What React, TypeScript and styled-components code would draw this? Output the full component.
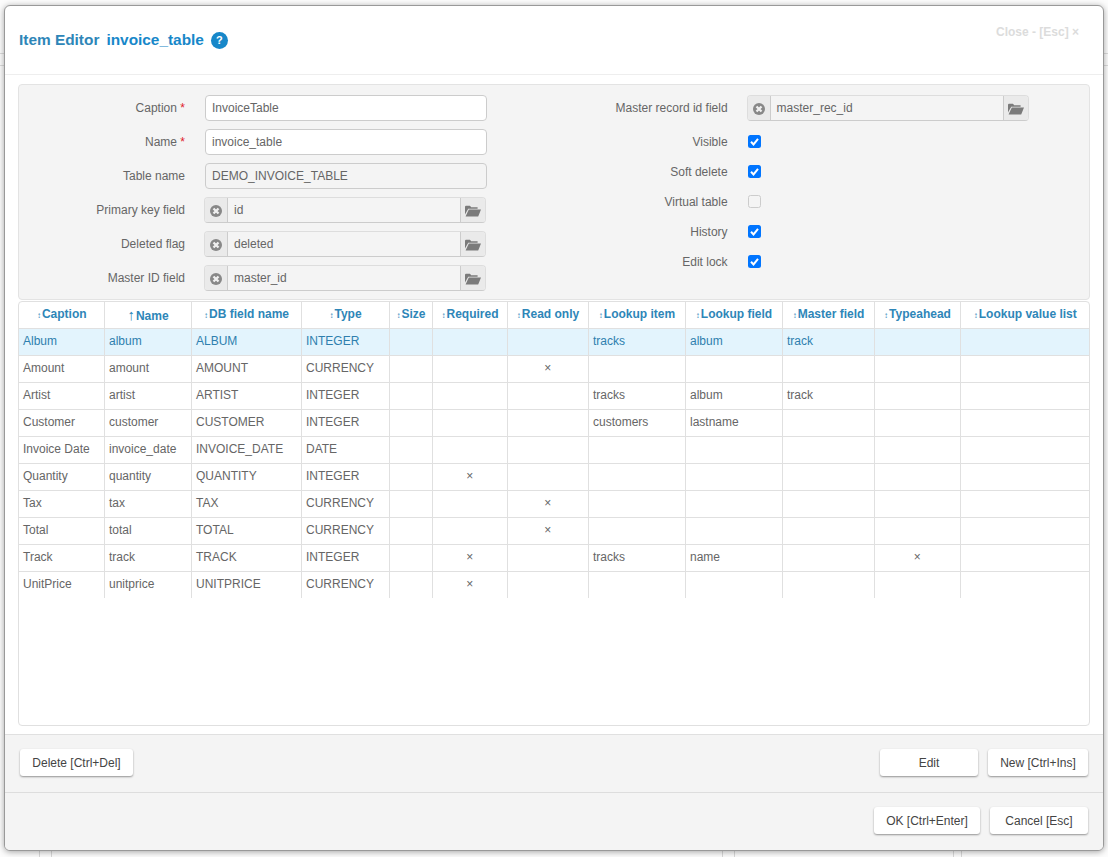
import React from 'react';
import styled, { createGlobalStyle } from 'styled-components';

const GlobalStyle = createGlobalStyle`
  html, body {
    margin: 0;
    height: 100%;
    background: #fcfcfc;
    overflow: hidden;
  }
  body {
    font-family: 'Liberation Sans', Arial, sans-serif;
    font-size: 12px;
    color: #666;
  }
`;

interface Column {
  title: string;
  width: number;
  sorted?: boolean;
}

const columns: Column[] = [
  { title: 'Caption', width: 85 },
  { title: 'Name', width: 87, sorted: true },
  { title: 'DB field name', width: 110 },
  { title: 'Type', width: 88 },
  { title: 'Size', width: 43 },
  { title: 'Required', width: 75 },
  { title: 'Read only', width: 81 },
  { title: 'Lookup item', width: 97 },
  { title: 'Lookup field', width: 97 },
  { title: 'Master field', width: 92 },
  { title: 'Typeahead', width: 86 },
  { title: 'Lookup value list', width: 129 },
];

const rows: string[][] = [
  ['Album', 'album', 'ALBUM', 'INTEGER', '', '', '', 'tracks', 'album', 'track', '', ''],
  ['Amount', 'amount', 'AMOUNT', 'CURRENCY', '', '', '×', '', '', '', '', ''],
  ['Artist', 'artist', 'ARTIST', 'INTEGER', '', '', '', 'tracks', 'album', 'track', '', ''],
  ['Customer', 'customer', 'CUSTOMER', 'INTEGER', '', '', '', 'customers', 'lastname', '', '', ''],
  ['Invoice Date', 'invoice_date', 'INVOICE_DATE', 'DATE', '', '', '', '', '', '', '', ''],
  ['Quantity', 'quantity', 'QUANTITY', 'INTEGER', '', '×', '', '', '', '', '', ''],
  ['Tax', 'tax', 'TAX', 'CURRENCY', '', '', '×', '', '', '', '', ''],
  ['Total', 'total', 'TOTAL', 'CURRENCY', '', '', '×', '', '', '', '', ''],
  ['Track', 'track', 'TRACK', 'INTEGER', '', '×', '', 'tracks', 'name', '', '×', ''],
  ['UnitPrice', 'unitprice', 'UNITPRICE', 'CURRENCY', '', '×', '', '', '', '', '', ''],
];

const ClearIcon = () => (
  <svg width="12" height="12" viewBox="0 0 12 12">
    <circle cx="6" cy="6" r="6" fill="#888" />
    <path d="M3.5 3.5 L8.5 8.5 M8.5 3.5 L3.5 8.5" stroke="#f0f0f0" strokeWidth="2.3" />
  </svg>
);

const FolderIcon = () => (
  <svg width="16" height="12" viewBox="0 0 16 12">
    <path d="M0 2 Q0 .8 1 .8 H5 L6.2 2.2 H12.6 V3.8 H3.2 L0 9.5 Z" fill="#7b7b7b" />
    <path d="M3.8 4.6 H16 L13.2 11.4 H0.6 Z" fill="#7b7b7b" />
  </svg>
);

const CheckIcon = () => (
  <svg width="13" height="13" viewBox="0 0 13 13">
    <path d="M3 6.8 L5.5 9.4 L10 3.8" fill="none" stroke="#fff" strokeWidth="2" />
  </svg>
);

const LookupField = ({ value, width }: { value: string; width: number }) => (
  <Lookup $width={width}>
    <LookupAddon $left>
      <ClearIcon />
    </LookupAddon>
    <LookupValue>{value}</LookupValue>
    <LookupAddon>
      <FolderIcon />
    </LookupAddon>
  </Lookup>
);

const LeftRow = ({ label, required, children }: { label: string; required?: boolean; children: React.ReactNode }) => (
  <LeftFormRow>
    <LeftLabel>
      {label}
      {required && <Star> *</Star>}
    </LeftLabel>
    {children}
  </LeftFormRow>
);

const CheckRow = ({ label, checked }: { label: string; checked: boolean }) => (
  <CheckFormRow>
    <RightLabel>{label}</RightLabel>
    <CheckBox $checked={checked}>{checked && <CheckIcon />}</CheckBox>
  </CheckFormRow>
);

const App = () => {
  return (
    <>
      <GlobalStyle />
      <PageBehind>
        <BackLine $top={53} />
        <BackLine $top={65} />
        <BackTick $left={39} />
        <BackTick $left={51} />
        <BackTick $left={722} />
        <BackTick $left={734} />
        <BackTick $left={953} />
        <BackTick $left={961} />
      </PageBehind>
      <Page>
        <Dialog>
          <Header>
            <Title>
              <span>Item Editor</span>
              <TitleName>invoice_table</TitleName>
              <HelpBadge>?</HelpBadge>
            </Title>
            <CloseLink>Close - [Esc] ×</CloseLink>
          </Header>
          <Body>
            <FormPanel>
              <FormColumn>
                <LeftRow label="Caption" required>
                  <TextField>InvoiceTable</TextField>
                </LeftRow>
                <LeftRow label="Name" required>
                  <TextField>invoice_table</TextField>
                </LeftRow>
                <LeftRow label="Table name">
                  <TextField $readOnly>DEMO_INVOICE_TABLE</TextField>
                </LeftRow>
                <LeftRow label="Primary key field">
                  <LookupField value="id" width={282} />
                </LeftRow>
                <LeftRow label="Deleted flag">
                  <LookupField value="deleted" width={282} />
                </LeftRow>
                <LeftRow label="Master ID field">
                  <LookupField value="master_id" width={282} />
                </LeftRow>
              </FormColumn>
              <FormColumn>
                <RightFormRow>
                  <RightLabel>Master record id field</RightLabel>
                  <LookupField value="master_rec_id" width={282} />
                </RightFormRow>
                <CheckList>
                  <CheckRow label="Visible" checked />
                  <CheckRow label="Soft delete" checked />
                  <CheckRow label="Virtual table" checked={false} />
                  <CheckRow label="History" checked />
                  <CheckRow label="Edit lock" checked />
                </CheckList>
              </FormColumn>
            </FormPanel>
            <TableFrame>
              <Grid>
                <colgroup>
                  {columns.map((c) => (
                    <col key={c.title} style={{ width: c.width }} />
                  ))}
                </colgroup>
                <thead>
                  <tr>
                    {columns.map((c) => (
                      <HeadCell key={c.title}>
                        <SortMark $sorted={c.sorted}>{c.sorted ? '↑' : '↕'}</SortMark>
                        <HeadText>{c.title}</HeadText>
                      </HeadCell>
                    ))}
                  </tr>
                </thead>
                <tbody>
                  {rows.map((row, i) => (
                    <GridRow key={row[0]} $selected={i === 0} $last={i === rows.length - 1}>
                      {row.map((cell, j) => (
                        <GridCell key={columns[j].title} $mark={cell === '×'}>
                          {cell}
                        </GridCell>
                      ))}
                    </GridRow>
                  ))}
                </tbody>
              </Grid>
            </TableFrame>
          </Body>
          <Toolbar>
            <ActionButton $width={113}>Delete [Ctrl+Del]</ActionButton>
            <ButtonGroup>
              <ActionButton $width={98}>Edit</ActionButton>
              <ActionButton $width={100}>New [Ctrl+Ins]</ActionButton>
            </ButtonGroup>
          </Toolbar>
          <Footer>
            <ActionButton $width={106}>OK [Ctrl+Enter]</ActionButton>
            <ActionButton $width={98}>Cancel [Esc]</ActionButton>
          </Footer>
        </Dialog>
      </Page>
    </>
  );
};

export default App;

const PageBehind = styled.div`
  position: absolute;
  inset: 0;
`;

const BackLine = styled.div<{ $top: number }>`
  position: absolute;
  left: 0;
  right: 0;
  top: ${(p) => p.$top}px;
  height: 1px;
  background: #dcdcdc;
`;

const BackTick = styled.div<{ $left: number }>`
  position: absolute;
  bottom: 0;
  height: 30px;
  left: ${(p) => p.$left}px;
  width: 1px;
  background: #d8d8d8;
`;

const Page = styled.div`
  position: relative;
  padding: 5px 4px 0 4px;
`;

const Dialog = styled.div`
  display: flex;
  flex-direction: column;
  width: 1100px;
  height: 846px;
  box-sizing: border-box;
  background: #fff;
  border-radius: 6px;
  border: 1px solid #999;
  box-shadow: 0 1px 6px rgba(0, 0, 0, 0.35);
  overflow: hidden;
`;

const Header = styled.div`
  display: flex;
  justify-content: space-between;
  align-items: flex-start;
  height: 69px;
  flex: none;
  box-sizing: border-box;
  padding: 0 24px 0 14px;
  border-bottom: 1px solid #eee;
`;

const Title = styled.h3`
  display: flex;
  align-items: center;
  margin: 24px 0 0;
  height: 20px;
  font-size: 15.4px;
  font-weight: bold;
  line-height: 20px;
  color: #2e86b8;
`;

const TitleName = styled.span`
  margin-left: 7px;
  color: #1787c9;
`;

const HelpBadge = styled.span`
  display: flex;
  align-items: center;
  justify-content: center;
  width: 17px;
  height: 17px;
  margin-left: 7px;
  border-radius: 50%;
  background: #1787c9;
  color: #fff;
  font-size: 11px;
`;

const CloseLink = styled.a`
  margin-top: 18px;
  font-size: 12px;
  font-weight: bold;
  line-height: 16px;
  color: #dcdcdc;
`;

const Body = styled.div`
  display: flex;
  flex-direction: column;
  flex: 1;
  min-height: 0;
  padding: 9px 13px 8px 13px;
`;

const FormPanel = styled.div`
  display: flex;
  height: 216px;
  flex: none;
  box-sizing: border-box;
  padding: 10px 0 0;
  background: #f4f4f4;
  border: 1px solid #e3e3e3;
  border-radius: 4px;
`;

const FormColumn = styled.div`
  display: flex;
  flex-direction: column;
  gap: 8px;
  width: 536px;
  flex: none;
`;

const LeftFormRow = styled.div`
  display: flex;
  align-items: center;
  height: 26px;
`;

const LeftLabel = styled.label`
  width: 166px;
  flex: none;
  margin-right: 19px;
  text-align: right;
`;

const RightFormRow = styled.div`
  display: flex;
  align-items: center;
  height: 26px;
`;

const RightLabel = styled.label`
  width: 172.6px;
  flex: none;
  margin-right: 19px;
  text-align: right;
`;

const Star = styled.span`
  color: #e0202a;
`;

const TextField = styled.div<{ $readOnly?: boolean }>`
  width: 282px;
  height: 26px;
  box-sizing: border-box;
  margin-left: 1px;
  padding: 0 6px;
  line-height: 24px;
  background: ${(p) => (p.$readOnly ? '#f4f4f4' : '#fff')};
  border: 1px solid #ccc;
  border-radius: 4px;
`;

const Lookup = styled.div<{ $width: number }>`
  display: flex;
  width: ${(p) => p.$width}px;
  height: 26px;
  box-sizing: border-box;
  background: #f4f4f4;
  border: 1px solid #ddd;
  border-bottom-color: #ccc;
  border-radius: 4px;
  overflow: hidden;
`;

const LookupAddon = styled.div<{ $left?: boolean }>`
  display: flex;
  align-items: center;
  justify-content: center;
  flex: none;
  width: ${(p) => (p.$left ? '22px' : '24px')};
  background: #eaeaea;
  padding-top: 1px;
  box-sizing: border-box;
`;

const LookupValue = styled.div`
  flex: 1;
  padding: 0 6px;
  line-height: 24px;
  border-left: 1px solid #ccc;
  border-right: 1px solid #ccc;
`;

const CheckList = styled.div`
  display: flex;
  flex-direction: column;
  gap: 17px;
  padding-top: 6px;
`;

const CheckFormRow = styled.div`
  display: flex;
  align-items: center;
  height: 13px;
`;

const CheckBox = styled.span<{ $checked: boolean }>`
  display: flex;
  width: 13px;
  height: 13px;
  box-sizing: border-box;
  margin-left: 1px;
  border-radius: 2.5px;
  background: ${(p) => (p.$checked ? '#0075ff' : '#f4f4f4')};
  border: ${(p) => (p.$checked ? 'none' : '1px solid #ccc')};
`;

const TableFrame = styled.div`
  flex: 1;
  min-height: 0;
  margin-top: 1px;
  background: #fff;
  border: 1px solid #e0e0e0;
  border-radius: 4px;
  overflow: hidden;
`;

const Grid = styled.table`
  border-collapse: collapse;
  table-layout: fixed;
  width: 1070px;
`;

const HeadCell = styled.th`
  box-sizing: border-box;
  height: 26px;
  padding: 0 2px 1px 3px;
  font-size: 12px;
  font-weight: bold;
  color: #2e86b8;
  white-space: nowrap;
  border-left: 1px solid #e0e0e0;
  border-bottom: 1px solid #e0e0e0;
  &:first-child {
    border-left: none;
  }
`;

const SortMark = styled.span<{ $sorted?: boolean }>`
  margin-right: 1px;
  font-size: ${(p) => (p.$sorted ? '15px' : '8px')};
  font-weight: normal;
  color: #2e86b8;
`;

const HeadText = styled.span``;

const GridRow = styled.tr<{ $selected?: boolean; $last?: boolean }>`
  background: ${(p) => (p.$selected ? '#e3f4fd' : 'transparent')};
  color: ${(p) => (p.$selected ? '#2e7fae' : '#666')};
  td {
    border-bottom: ${(p) => (p.$last ? 'none' : '1px solid #e0e0e0')};
  }
`;

const GridCell = styled.td<{ $mark?: boolean }>`
  box-sizing: border-box;
  height: 27px;
  padding: 0 4px 2px 4.5px;
  font-size: 12px;
  white-space: nowrap;
  overflow: hidden;
  text-align: ${(p) => (p.$mark ? 'center' : 'left')};
  border-left: 1px solid #e0e0e0;
  &:first-child {
    padding-left: 4px;
    border-left: none;
  }
`;

const Toolbar = styled.div`
  display: flex;
  justify-content: space-between;
  align-items: center;
  height: 58px;
  flex: none;
  box-sizing: border-box;
  padding: 0 15px 2px;
  background: #f4f4f4;
  border-top: 1px solid #e0e0e0;
`;

const ButtonGroup = styled.div`
  display: flex;
  gap: 10px;
`;

const Footer = styled.div`
  display: flex;
  justify-content: flex-end;
  gap: 10px;
  height: 58px;
  flex: none;
  box-sizing: border-box;
  padding: 14px 15px 0;
  background: #f4f4f4;
  border-top: 1px solid #ddd;
`;

const ActionButton = styled.button<{ $width: number }>`
  width: ${(p) => p.$width}px;
  height: 27px;
  padding: 0;
  font-family: inherit;
  font-size: 12px;
  color: #444;
  background: #fff;
  border: none;
  border-radius: 3px;
  box-shadow: 0 1px 2px rgba(0, 0, 0, 0.4);
`;
